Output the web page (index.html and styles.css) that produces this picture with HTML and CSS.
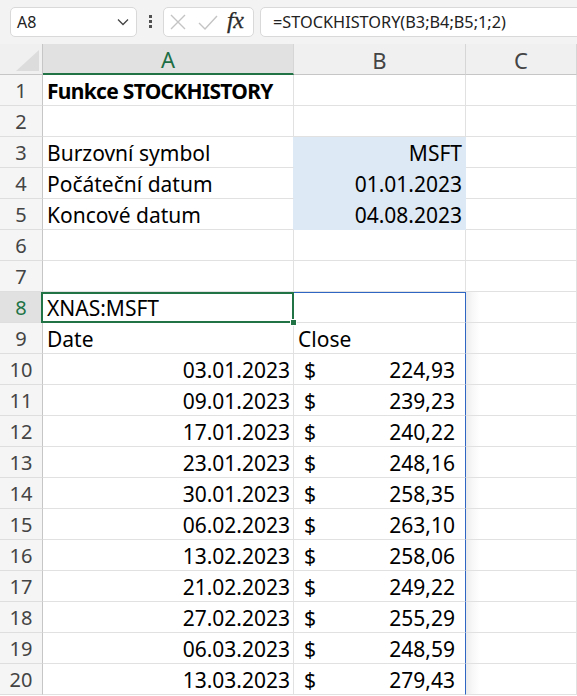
FILE: index.html
```html
<!DOCTYPE html>
<html lang="cs">
<head>
<meta charset="utf-8">
<title>STOCKHISTORY</title>
<link rel="stylesheet" href="styles.css">
</head>
<body>
<div class="toolbar">
  <div class="namebox">
    <span class="nb-text">A8</span>
    <svg class="chev" width="12" height="8" viewBox="0 0 12 8"><path d="M1 1.5 L6 6.5 L11 1.5" fill="none" stroke="#444" stroke-width="1.3"/></svg>
  </div>
  <div class="dots"><i></i><i></i><i></i></div>
  <div class="fxbox">
    <svg class="ic-x" width="16" height="16" viewBox="0 0 16 16"><path d="M1 1 L15 15 M15 1 L1 15" stroke="#c4c4c4" stroke-width="1.4" fill="none"/></svg>
    <svg class="ic-ok" width="20" height="15" viewBox="0 0 20 15"><path d="M1 8 L7 14 L19 1" stroke="#c4c4c4" stroke-width="1.4" fill="none"/></svg>
    <span class="fx">fx</span>
  </div>
  <div class="formula">=STOCKHISTORY(B3;B4;B5;1;2)</div>
</div>
<div class="sheet">
  <div class="corner"></div>
  <div class="ch ch-sel">A</div>
  <div class="ch">B</div>
  <div class="ch">C</div>

  <div class="rh">1</div><div class="c bold">Funkce STOCKHISTORY</div><div class="c"></div><div class="c"></div>
  <div class="rh">2</div><div class="c"></div><div class="c"></div><div class="c"></div>
  <div class="rh">3</div><div class="c pre-fill">Burzovní symbol</div><div class="c fill r">MSFT</div><div class="c"></div>
  <div class="rh">4</div><div class="c pre-fill">Počáteční datum</div><div class="c fill r">01.01.2023</div><div class="c"></div>
  <div class="rh">5</div><div class="c pre-fill">Koncové datum</div><div class="c fill r">04.08.2023</div><div class="c"></div>
  <div class="rh">6</div><div class="c"></div><div class="c"></div><div class="c"></div>
  <div class="rh">7</div><div class="c"></div><div class="c"></div><div class="c"></div>
  <div class="rh rh-sel">8</div><div class="c active">XNAS:MSFT</div><div class="c spill spill-top"></div><div class="c shade"></div>
  <div class="rh">9</div><div class="c">Date</div><div class="c spill">Close</div><div class="c shade"></div>
  <div class="rh">10</div><div class="c r">03.01.2023</div><div class="c spill acc"><span>$</span><span>224,93</span></div><div class="c shade"></div>
  <div class="rh">11</div><div class="c r">09.01.2023</div><div class="c spill acc"><span>$</span><span>239,23</span></div><div class="c shade"></div>
  <div class="rh">12</div><div class="c r">17.01.2023</div><div class="c spill acc"><span>$</span><span>240,22</span></div><div class="c shade"></div>
  <div class="rh">13</div><div class="c r">23.01.2023</div><div class="c spill acc"><span>$</span><span>248,16</span></div><div class="c shade"></div>
  <div class="rh">14</div><div class="c r">30.01.2023</div><div class="c spill acc"><span>$</span><span>258,35</span></div><div class="c shade"></div>
  <div class="rh">15</div><div class="c r">06.02.2023</div><div class="c spill acc"><span>$</span><span>263,10</span></div><div class="c shade"></div>
  <div class="rh">16</div><div class="c r">13.02.2023</div><div class="c spill acc"><span>$</span><span>258,06</span></div><div class="c shade"></div>
  <div class="rh">17</div><div class="c r">21.02.2023</div><div class="c spill acc"><span>$</span><span>249,22</span></div><div class="c shade"></div>
  <div class="rh">18</div><div class="c r">27.02.2023</div><div class="c spill acc"><span>$</span><span>255,29</span></div><div class="c shade"></div>
  <div class="rh">19</div><div class="c r">06.03.2023</div><div class="c spill acc"><span>$</span><span>248,59</span></div><div class="c shade"></div>
  <div class="rh">20</div><div class="c r">13.03.2023</div><div class="c spill acc"><span>$</span><span>279,43</span></div><div class="c shade"></div>
</div>
</body>
</html>
```
FILE: styles.css
```css
html, body {
  margin: 0;
  padding: 0;
  background: #ffffff;
  overflow: hidden;
}
body {
  font-family: "Noto Sans", "Segoe UI", sans-serif;
  color: #000;
}

/* ---------- formula bar ---------- */
.toolbar {
  height: 44px;
  box-sizing: border-box;
  background: #f3f3f3;
  display: flex;
  align-items: flex-start;
  padding: 7px 0 0 10px;
}
.namebox {
  width: 127px;
  height: 30px;
  box-sizing: border-box;
  background: #fff;
  border: 1px solid #d9d9d9;
  border-radius: 5px;
  display: flex;
  align-items: center;
  justify-content: space-between;
  padding: 0 7px 0 6px;
}
.nb-text {
  font-size: 16px;
  color: #222;
}
.dots {
  width: 26px;
  display: flex;
  flex-direction: column;
  align-items: center;
  gap: 2px;
  padding-top: 8px;
}
.dots i {
  display: block;
  width: 3px;
  height: 3px;
  background: #505050;
}
.fxbox {
  width: 91px;
  height: 30px;
  box-sizing: border-box;
  background: #fff;
  border: 1px solid #d9d9d9;
  border-radius: 5px;
  display: flex;
  align-items: center;
  padding-left: 6px;
}
.ic-x { margin-right: 12px; }
.ic-ok { margin-right: 9px; }
.fx {
  font-family: "Liberation Serif", "DejaVu Serif", serif;
  font-style: italic;
  font-size: 24px;
  color: #2b2b2b;
  line-height: 1;
  margin-top: -4px;
  letter-spacing: -0.5px;
  -webkit-text-stroke: 0.3px #2b2b2b;
}
.formula {
  flex: 1;
  height: 30px;
  box-sizing: border-box;
  margin-left: 6px;
  margin-right: -10px;
  background: #fff;
  border: 1px solid #d9d9d9;
  border-radius: 5px;
  padding-left: 12px;
  font-size: 16.3px;
  line-height: 28px;
  color: #222;
  white-space: nowrap;
}

/* ---------- sheet ---------- */
.sheet {
  display: grid;
  grid-template-columns: 43px 251px 172px 1fr;
  grid-auto-rows: 31px;
}
.corner {
  position: relative;
  background: #f0f0f0;
  border-right: 1px solid #c6c6c6;
  border-bottom: 1px solid #c6c6c6;
}
.corner::after {
  content: "";
  position: absolute;
  right: 3px;
  bottom: 3px;
  width: 23px;
  height: 21px;
  background: #dcdcdc;
  clip-path: polygon(100% 0, 100% 100%, 0 100%);
}
.ch {
  background: #f0f0f0;
  border-right: 1px solid #d6d6d6;
  border-bottom: 1px solid #c6c6c6;
  text-align: center;
  font-size: 22px;
  line-height: 28px;
  padding-top: 2px;
  color: #444;
}
.ch-sel {
  background: #e1e1e1;
  color: #1d6e45;
  border-bottom: 2px solid #217346;
  line-height: 27px;
}
.rh {
  background: #f5f5f5;
  border-right: 1px solid #c6c6c6;
  border-bottom: 1px solid #dedede;
  text-align: center;
  font-size: 20px;
  line-height: 26px;
  padding-top: 3px;
  color: #444;
}
.rh-sel {
  background: #e1e1e1;
  color: #217346;
}
.c {
  position: relative;
  border-right: 1px solid #e1e1e1;
  border-bottom: 1px solid #e1e1e1;
  font-size: 21px;
  line-height: 26px;
  padding: 3px 3px 0 4px;
  white-space: nowrap;
  min-width: 0;
}
.bold {
  font-weight: bold;
  letter-spacing: -0.7px;
}
.r { text-align: right; }

.fill {
  background: #dde9f5;
  border-right-color: #dde9f5;
  border-bottom-color: #dde9f5;
}
.pre-fill { border-right-color: #dde9f5; }

.acc {
  display: flex;
  justify-content: space-between;
  padding-left: 10px;
  padding-right: 10px;
}

.spill { border-right-color: #2f66c4; }
.spill-top::before {
  content: "";
  position: absolute;
  top: 0;
  left: 0;
  right: -1px;
  height: 1px;
  background: #2f66c4;
}
.shade {
  background: linear-gradient(to right, #ebebeb 0, #f7f7f7 6px, #ffffff 14px);
}

.active::after {
  content: "";
  position: absolute;
  top: 0;
  left: -2px;
  right: -1px;
  bottom: -1px;
  border: 2px solid #217346;
  z-index: 2;
}
.active::before {
  content: "";
  position: absolute;
  right: -4px;
  bottom: -4px;
  width: 5px;
  height: 5px;
  background: #217346;
  border: 1px solid #fff;
  z-index: 3;
}
```
